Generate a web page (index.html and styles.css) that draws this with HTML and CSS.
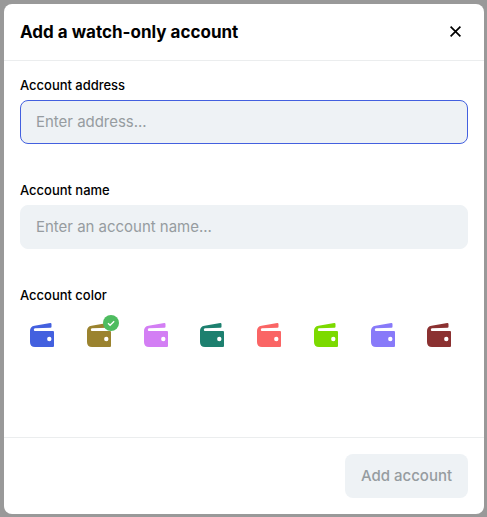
FILE: index.html
```html
<!DOCTYPE html>
<html lang="en">
<head>
<meta charset="utf-8">
<title>Add a watch-only account</title>
<link rel="stylesheet" href="styles.css">
</head>
<body>
<svg class="defs" aria-hidden="true">
  <symbol id="wallet" viewBox="0 0 24 24">
    <path fill="currentColor" fill-rule="evenodd" d="M4.5 2.7 20.3.1Q21.5 0 21.5 1.2V3.7Q21.5 4.6 20.5 4.7L5 5.3Q3.8 5.4 3.8 6.7T5 8H23Q24 8 24 9V23Q24 24 23 24H5Q0 24 0 19V7.8Q0 3.5 4.5 2.7ZM19.3 13.8a2.2 2.2 0 1 0 0 4.4 2.2 2.2 0 0 0 0-4.4Z"/>
  </symbol>
</svg>
<div class="modal">
  <header class="header">
    <h1 class="title">Add a watch-only account</h1>
    <button class="close" aria-label="Close"><svg width="11" height="11" viewBox="0 0 11 11"><path d="M.6.6 10.4 10.4M10.4.6.6 10.4"/></svg></button>
  </header>
  <main class="content">
    <div class="field">
      <label class="label" for="address">Account address</label>
      <input class="input input-active" id="address" placeholder="Enter address...">
    </div>
    <div class="field">
      <label class="label" for="name">Account name</label>
      <input class="input" id="name" placeholder="Enter an account name...">
    </div>
    <div class="label">Account color</div>
    <div class="colors">
      <div class="wallet blue"><svg><use href="#wallet"/></svg></div>
      <div class="wallet gold"><svg><use href="#wallet"/></svg>
        <span class="badge"><svg viewBox="0 0 16 16"><path d="M5 8.2 7.1 10.3 11.2 6.2"/></svg></span>
      </div>
      <div class="wallet orchid"><svg><use href="#wallet"/></svg></div>
      <div class="wallet teal"><svg><use href="#wallet"/></svg></div>
      <div class="wallet coral"><svg><use href="#wallet"/></svg></div>
      <div class="wallet lime"><svg><use href="#wallet"/></svg></div>
      <div class="wallet violet"><svg><use href="#wallet"/></svg></div>
      <div class="wallet maroon"><svg><use href="#wallet"/></svg></div>
    </div>
  </main>
  <footer class="footer"><button class="submit">Add account</button></footer>
</div>
</body>
</html>
```
FILE: styles.css
```css
* { box-sizing: border-box; }
body {
  margin: 0;
  height: 517px;
  padding: 4px 3px 3px 4px;
  overflow: hidden;
  background: #999;
  color: #000;
  font-family: Inter, "Liberation Sans", sans-serif;
}
.defs { display: none; }
.modal {
  display: flex;
  flex-direction: column;
  height: 510px;
  border-radius: 8px;
  background: #fff;
}
.header {
  display: flex;
  align-items: center;
  justify-content: space-between;
  height: 57px;
  padding: 0 23px 1px 16px;
  border-bottom: 1px solid #ebedee;
}
.title { margin: 0; font-size: 17px; font-weight: 700; line-height: 24px; }
.close { display: flex; padding: 0; border: 0; background: none; }
.close svg { display: block; }
.close path { fill: none; stroke: #000; stroke-width: 1.7; }
.content { flex: 1; padding: 15px 16px 0; }
.field { height: 105px; }
.label { display: block; height: 18px; font-size: 13px; font-weight: 500; line-height: 18px; letter-spacing: -0.02px; }
.input {
  display: block;
  width: 100%;
  height: 44px;
  margin-top: 6px;
  padding: 0 15px 2px;
  border: 1px solid #eef2f5;
  border-radius: 8px;
  outline: 0;
  background: #eef2f5;
  font: 400 15px/20px Inter, "Liberation Sans", sans-serif;
  letter-spacing: -0.02px;
}
.input::placeholder { color: #969ca0; opacity: 1; }
.input-active { border-color: #4360df; }
.colors {
  display: flex;
  justify-content: space-between;
  margin: 19px 16.7px 0 10px;
}
.wallet { position: relative; width: 24px; height: 24px; }
.wallet svg { display: block; width: 100%; height: 100%; }
.badge {
  position: absolute;
  top: -8px;
  left: 16px;
  width: 16px;
  height: 16px;
  border-radius: 50%;
  background: #4ebc60;
}
.badge path { fill: none; stroke: #fff; stroke-width: 1.3; }
.blue { color: #4360df; }
.gold { color: #9b832f; }
.orchid { color: #d37ef4; }
.teal { color: #1d806f; }
.coral { color: #fa6565; }
.lime { color: #7cda00; }
.violet { color: #887af9; }
.maroon { color: #8b3131; }
.footer {
  display: flex;
  justify-content: flex-end;
  height: 77px;
  padding: 16px 16px 0;
  border-top: 1px solid #ebedee;
}
.submit {
  width: 123px;
  height: 44px;
  padding: 0;
  border: 0;
  border-radius: 8px;
  background: #eef2f5;
  color: #969ca0;
  font: 500 15px/22px Inter, "Liberation Sans", sans-serif;
}
```
